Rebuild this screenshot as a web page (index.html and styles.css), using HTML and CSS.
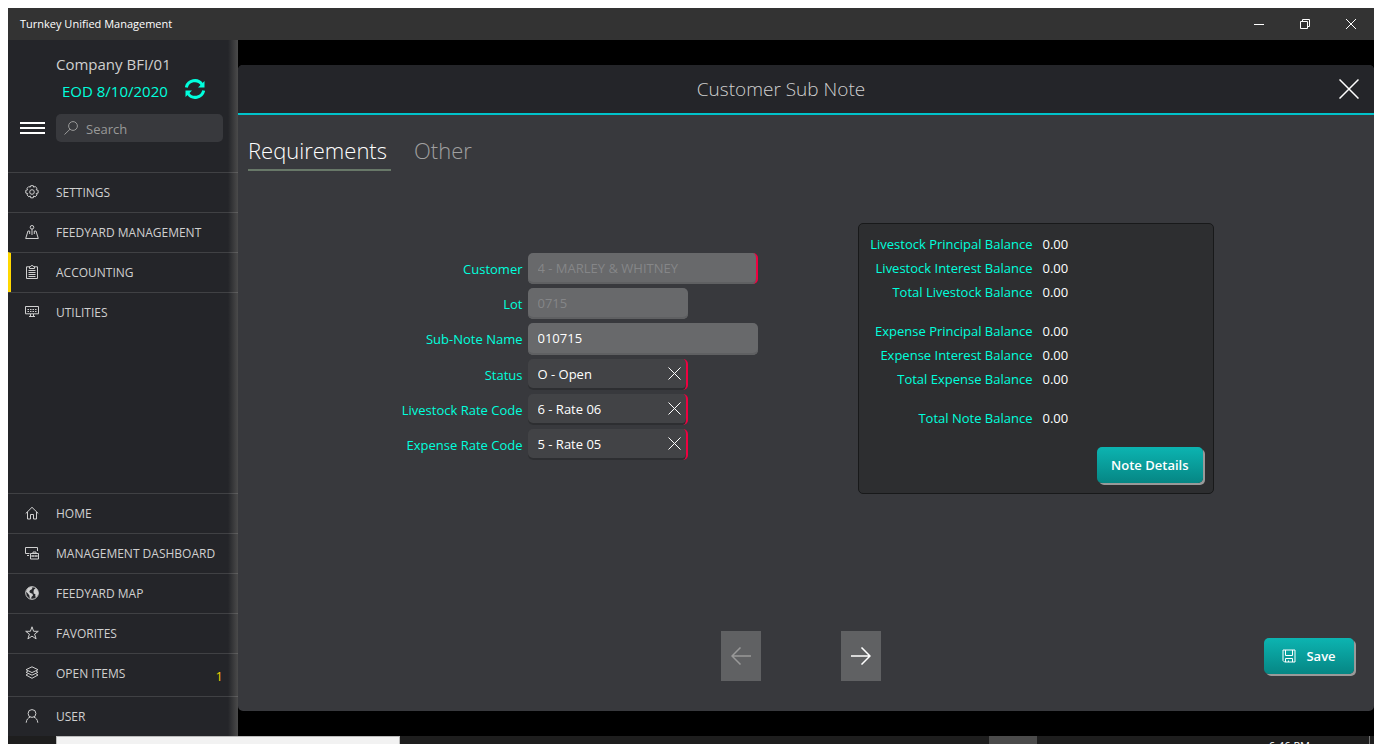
FILE: index.html
```
<!DOCTYPE html>
<html lang="en">
<head>
<meta charset="utf-8">
<title>Turnkey Unified Management</title>
<link rel="stylesheet" href="styles.css">
</head>
<body>
<div class="window">
  <header class="titlebar">
    <span class="titlebar-name">Turnkey Unified Management</span>
    <div class="window-controls">
      <button type="button" aria-label="Minimize"><svg width="10" height="10" viewBox="0 0 10 10"><path d="M0 5.5h10"/></svg></button>
      <button type="button" aria-label="Restore"><svg width="10" height="10" viewBox="0 0 10 10"><path d="M.5 2.5h7v7h-7zM2.5 2.5v-2h7v7h-2"/></svg></button>
      <button type="button" aria-label="Close window"><svg width="10" height="10" viewBox="0 0 10 10"><path d="M0 0l10 10M10 0L0 10"/></svg></button>
    </div>
  </header>

  <div class="workspace">
    <aside class="sidebar">
      <div class="sidebar-head">
        <div class="company">Company BFI/01</div>
        <div class="eod">
          <span>EOD 8/10/2020</span>
          <button type="button" class="refresh" aria-label="Refresh">
            <svg width="20" height="20" viewBox="0 0 20 20"><path class="arc" d="M1.300 8.500A8.700 8.700 0 0 1 17 5.500M18.700 11.500A8.700 8.700 0 0 1 3 14.500"/><path class="tip" d="M19.500 2v6.500H13zM.5 18v-6.500H7z"/></svg>
          </button>
        </div>
        <div class="search-row">
          <button type="button" class="burger" aria-label="Menu"><i></i><i></i><i></i></button>
          <label class="search">
            <svg width="14" height="14" viewBox="0 0 14 14"><circle cx="9" cy="5" r="4.400"/><path d="M6 8.200L.5 13.500"/></svg>
            <input type="search" placeholder="Search" aria-label="Search">
          </label>
        </div>
      </div>

      <nav class="menu">
        <a href="#">
          <svg viewBox="0 0 14 14"><circle cx="7" cy="7" r="2.300"/><path d="M5.700.7h2.600l.4 1.500 1.500-.7 1.800 1.800-.8 1.500 1.900.5v2.800l-1.900.4.8 1.400-1.800 1.900-1.500-.8-.4 1.800H5.700l-.5-1.800-1.400.8L2 9.900l.7-1.400-1.900-.4V5.300l1.900-.5L2 3.300l1.800-1.800 1.400.7z"/></svg>
          <span>SETTINGS</span></a>
        <a href="#">
          <svg viewBox="0 0 14 14"><circle cx="7" cy="2.300" r="1.800"/><path d="M7 4v6M4.500 6H3L.7 13.500h12.600L11 6H9.500M4.700 9V6M9.300 9V6"/></svg>
          <span>FEEDYARD MANAGEMENT</span></a>
        <a href="#" class="current" aria-current="page">
          <svg viewBox="0 0 14 14"><path d="M4.500 1.800h-3v11.700h11V1.800h-3M4.500 3.500v-2h1.300c0-1.500 2.400-1.500 2.400 0h1.300v2zM3.500 5.500h7M3.500 7.500h7M3.500 9.500h7M3.500 11.500h7"/></svg>
          <span>ACCOUNTING</span></a>
        <a href="#">
          <svg viewBox="0 0 14 14"><path d="M.5 1.500h13v7.300H.5zM4 11.500h6M5.500 9v2.500M8.500 9v2.500"/><path stroke-dasharray="1.500 1" d="M2.500 4.500h9M2.500 6.500h9"/></svg>
          <span>UTILITIES</span></a>
      </nav>

      <nav class="menu menu-bottom">
        <a href="#">
          <svg viewBox="0 0 14 14"><path d="M.7 7.500L7 1.300l6.300 6.200M2.500 6v7h3V8.500h3V13h3V6"/></svg>
          <span>HOME</span></a>
        <a href="#">
          <svg viewBox="0 0 14 14"><path d="M4.500 7.500H.5v-6h12V5M5.500 7.500h8v5.500h-8zM8 7.500V6h3v1.500M5.500 10h8M8 9v2M11 9v2M2 9.500h2"/></svg>
          <span>MANAGEMENT DASHBOARD</span></a>
        <a href="#">
          <svg viewBox="0 0 14 14"><circle cx="7" cy="7" r="6.300"/><path class="solid" d="M1 5.500L3 2l3-1.200 1.700 1L6.500 3.500 5 4.200 4.300 6l1.200 1 2 .8.5 1.700-1.600 1.400-.2 2.200-1.400-.8-.5-3L2.500 7zM9 3.500l2-1.500 2 3 .3 3-1.600 3-1.500-.5.2-2.200L8.700 7.500 8.500 5.200z"/></svg>
          <span>FEEDYARD MAP</span></a>
        <a href="#">
          <svg viewBox="0 0 14 14"><path d="M7 .8l1.600 4.500h4.700L9.600 8.100l1.500 4.800L7 10.100l-4.100 2.800 1.500-4.800L.7 5.300h4.700z"/></svg>
          <span>FAVORITES</span></a>
        <a href="#" class="tall">
          <svg viewBox="0 0 14 14"><path d="M7 .8l6 2.900-6 2.900-6-2.900zM2.800 5.300L1 6.300l6 2.900 6-2.900-1.800-1M2.800 8L1 9l6 3.300L13 9l-1.800-1"/></svg>
          <span>OPEN ITEMS</span><b class="count">1</b></a>
        <a href="#">
          <svg viewBox="0 0 14 14"><circle cx="7" cy="4.500" r="3.900"/><path d="M1.200 13.700c.3-3.200 2-5 4-5.600M12.800 13.700c-.3-3.200-2-5-4-5.600"/></svg>
          <span>USER</span></a>
      </nav>
    </aside>

    <main class="stage">
      <section class="dialog" aria-labelledby="dialog-title">
        <header class="dialog-head">
          <h1 id="dialog-title">Customer Sub Note</h1>
          <button type="button" class="dialog-close" aria-label="Close"><svg width="20" height="20" viewBox="0 0 20 20"><path d="M.5.5l19 19M19.500.5l-19 19"/></svg></button>
        </header>

        <div class="tabs" role="tablist">
          <button type="button" role="tab" aria-selected="true">Requirements</button>
          <button type="button" role="tab" aria-selected="false">Other</button>
        </div>

        <div class="content">
          <form class="fields">
            <label for="customer">Customer</label>
            <div class="field wide required"><input id="customer" value="4 - MARLEY &amp; WHITNEY" disabled></div>
            <label for="lot">Lot</label>
            <div class="field"><input id="lot" value="0715" disabled></div>
            <label for="subnote">Sub-Note Name</label>
            <div class="field wide editable"><input id="subnote" value="010715"></div>
            <label for="status">Status</label>
            <div class="field lookup required"><input id="status" value="O - Open"><button type="button" aria-label="Clear status"><svg width="13" height="13" viewBox="0 0 13 13"><path d="M.5.5l12 12M12.500.5l-12 12"/></svg></button></div>
            <label for="livestock">Livestock Rate Code</label>
            <div class="field lookup required"><input id="livestock" value="6 - Rate 06"><button type="button" aria-label="Clear livestock rate code"><svg width="13" height="13" viewBox="0 0 13 13"><path d="M.5.5l12 12M12.500.5l-12 12"/></svg></button></div>
            <label for="expense">Expense Rate Code</label>
            <div class="field lookup required"><input id="expense" value="5 - Rate 05"><button type="button" aria-label="Clear expense rate code"><svg width="13" height="13" viewBox="0 0 13 13"><path d="M.5.5l12 12M12.500.5l-12 12"/></svg></button></div>
          </form>

          <section class="balances">
            <dl>
              <dt>Livestock Principal Balance</dt><dd>0.00</dd>
              <dt>Livestock Interest Balance</dt><dd>0.00</dd>
              <dt>Total Livestock Balance</dt><dd>0.00</dd>
              <dt class="group">Expense Principal Balance</dt><dd class="group">0.00</dd>
              <dt>Expense Interest Balance</dt><dd>0.00</dd>
              <dt>Total Expense Balance</dt><dd>0.00</dd>
              <dt class="group">Total Note Balance</dt><dd class="group">0.00</dd>
            </dl>
            <button type="button" class="action">Note Details</button>
          </section>
        </div>

        <footer class="dialog-foot">
          <div class="pager">
            <button type="button" disabled aria-label="Previous"><svg width="20" height="18" viewBox="0 0 20 18"><path d="M20 9H1M9.500.5L1 9l8.500 8.500"/></svg></button>
            <button type="button" aria-label="Next"><svg width="20" height="18" viewBox="0 0 20 18"><path d="M0 9h19M10.500.5L19 9l-8.500 8.500"/></svg></button>
          </div>
          <button type="button" class="action save">
            <svg width="14" height="14" viewBox="0 0 14 14"><path d="M1 1h12v12H2.500L1 11.500zM3.500 1v5.500h7V1M3.500 13V9.500h7V13M6.500 13v-1.500"/></svg>
            Save</button>
        </footer>
      </section>
    </main>
  </div>

  <footer class="taskbar">
    <div class="task-search"></div>
    <div class="task-active"></div>
    <time>6:46 PM</time>
  </footer>
</div>
</body>
</html>
```
FILE: styles.css
```
* { box-sizing: border-box; }

body {
  margin: 0;
  background: #fff;
  color: #fff;
  font: 13px/20px "Open Sans", "Noto Sans", sans-serif;
}

button, input { font: inherit; color: inherit; }

button {
  margin: 0;
  padding: 0;
  border: 0;
  background: none;
}

svg {
  display: block;
  flex: none;
  fill: none;
  stroke: currentColor;
}

.window {
  display: flex;
  flex-direction: column;
  height: 100vh;
  padding: 8px 8px 0;
  overflow: hidden;
}

/* Title bar */
.titlebar {
  display: flex;
  flex: none;
  justify-content: space-between;
  height: 32px;
  background: #333;
}

.titlebar-name {
  padding-left: 12px;
  font-size: 11px;
  font-weight: 500;
  line-height: 32px;
}

.window-controls { display: flex; }

.window-controls button {
  display: grid;
  place-items: center;
  width: 46px;
}

.workspace {
  display: flex;
  flex: 1;
  min-height: 0;
}

/* Sidebar */
.sidebar {
  display: flex;
  flex: none;
  flex-direction: column;
  width: 230px;
  background: linear-gradient(to right, transparent 220px, #4b4b4b) #242529;
}

.sidebar-head {
  height: 132px;
  padding: 14px 15px 0 12px;
}

.company {
  padding-left: 36px;
  color: #d0d0d0;
  font-size: 15px;
}

.eod {
  display: flex;
  align-items: flex-start;
  gap: 17px;
  padding: 5px 0 0 42px;
  color: #0fd;
  font-size: 15px;
  line-height: 24px;
}

.refresh .arc { stroke-width: 3; }
.refresh .tip { fill: currentColor; stroke: none; }

.search-row {
  display: flex;
  align-items: center;
  gap: 11px;
  padding-top: 11px;
}

.burger {
  display: grid;
  gap: 3px;
  width: 25px;
}

.burger i {
  height: 2px;
  background: #fff;
}

.search {
  display: flex;
  flex: 1;
  align-items: center;
  gap: 8px;
  min-width: 0;
  height: 28px;
  padding: 0 8px;
  border-radius: 5px;
  background: #38393d;
  color: #999;
}

.search input {
  flex: 1;
  min-width: 0;
  padding: 2px 0 0;
  border: 0;
  background: none;
}

.search input::placeholder { color: #999; }

.menu a {
  display: flex;
  align-items: center;
  gap: 17px;
  height: 40px;
  padding: 0 15px 0 17px;
  border-top: 1px solid rgba(255, 255, 255, .13);
  color: #d0d0d0;
  font-size: 12px;
  text-decoration: none;
}

.menu .current {
  padding-left: 14px;
  border-left: 3px solid #ffd800;
}

.menu svg {
  width: 14px;
  height: 14px;
  margin-bottom: 2px;
}

.menu .solid { fill: currentColor; stroke: none; }
.menu-bottom { margin-top: auto; }

.menu .tall {
  height: 43px;
  padding-bottom: 2px;
}

.count {
  margin: 4px 0 0 auto;
  color: #f0d000;
  font-size: 13px;
  font-weight: 400;
}

/* Dialog */
.stage {
  display: flex;
  flex: 1;
  min-width: 0;
  padding: 25px 0;
  background: #000;
}

.dialog {
  display: flex;
  flex: 1;
  flex-direction: column;
  min-width: 0;
  border-radius: 5px;
  background: #38393d;
}

.dialog-head {
  display: grid;
  grid-template-columns: 1fr auto 1fr;
  align-items: center;
  height: 50px;
  padding: 0 15px;
  border-bottom: 2px solid #00c3cb;
  border-radius: 5px 5px 0 0;
  background: #242529;
}

.dialog-head h1 {
  grid-column: 2;
  margin: 0;
  padding-right: 50px;
  color: #d0d0d0;
  font-size: 19px;
  font-weight: 300;
}

.dialog-close { justify-self: end; }
.dialog-close svg { stroke-width: 1.5; }

.tabs {
  display: flex;
  gap: 23px;
  padding: 18px 10px 0;
}

.tabs button {
  height: 38px;
  padding-right: 4px;
  border-bottom: 2px solid transparent;
  color: #a0a0a0;
  font-size: 22px;
  font-weight: 300;
  line-height: 32px;
  padding-bottom: 2px;
}

.tabs [aria-selected="true"] {
  border-color: #687868;
  color: #fff;
}

.content {
  display: flex;
  flex: 1;
  align-items: flex-start;
  justify-content: center;
  gap: 100px;
  padding-top: 52px;
}

.fields {
  display: grid;
  grid-template-columns: 124px 230px;
  gap: 4px 5px;
  align-items: center;
  padding-top: 30px;
}

.fields label {
  color: #0fd;
  text-align: right;
  white-space: nowrap;
}

.field {
  display: flex;
  width: 160px;
  height: 31px;
  padding-left: 10px;
  border-radius: 5px;
  background: #68696b;
  box-shadow: inset 0 -2px #5f6062;
}

.field.wide { width: 230px; }
.field.editable { height: 32px; }
.field.required { border-right: 2px solid #f00040; }

.field.lookup {
  background: #424346;
  box-shadow: inset 0 -2px #2d2e31;
}

.field input {
  flex: 1;
  min-width: 0;
  padding: 0 0 2px;
  border: 0;
  background: none;
}

.field input:disabled { color: #858688; }

.field button {
  padding: 0 5px 2px;
}

.balances {
  display: flex;
  flex-direction: column;
  width: 356px;
  padding: 8px 9px;
  border: 1px solid #18191a;
  border-radius: 5px;
  background: #2d2e30;
}

.balances dl {
  display: grid;
  grid-template-columns: 165px 1fr;
  gap: 0 10px;
  margin: 0;
  line-height: 24px;
}

.balances dt {
  color: #0fd;
  text-align: right;
  white-space: nowrap;
}

.balances dd { margin: 0; }
.balances .group { margin-top: 15px; }

.action {
  display: flex;
  align-items: center;
  justify-content: center;
  gap: 10px;
  height: 36px;
  padding: 0 14px;
  border-radius: 5px;
  background: linear-gradient(#0cb4b1, #068684);
  box-shadow: 2px 2px #999;
  font-weight: 600;
}

.balances .action {
  align-self: flex-end;
  margin: 17px 1px 2px 0;
}

.dialog-foot {
  display: grid;
  grid-template-columns: 1fr auto 1fr;
  align-items: center;
  padding: 0 20px 30px 10px;
}

.pager {
  display: flex;
  grid-column: 2;
  gap: 80px;
}

.pager button {
  display: grid;
  place-items: center;
  width: 40px;
  height: 50px;
  background: #606163;
}

.pager svg { stroke-width: 1.5; }
.pager button:disabled { color: #999; }

.save {
  justify-self: end;
  width: 90px;
}

/* Taskbar */
.taskbar {
  display: flex;
  flex: none;
  height: 8px;
  padding: 0 4px 0 48px;
  overflow: hidden;
  background: #1e1e1e;
}

.task-search {
  width: 344px;
  border: 1px solid #bbb;
  border-bottom: 0;
  background: #f2f2f2;
}

.task-active {
  width: 48px;
  margin-left: 589px;
  background: #4b4b4b;
}

.taskbar time {
  margin-left: auto;
  padding-right: 59px;
  border-right: 1px solid #777;
  font-size: 11px;
}
```
